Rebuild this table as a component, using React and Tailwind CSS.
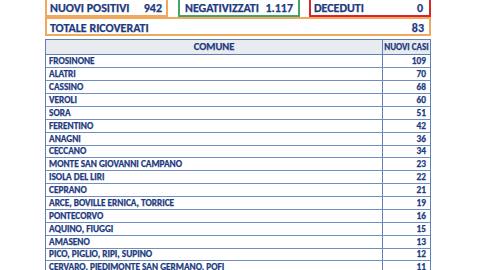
import React from "react";

const rows = [
  ["FROSINONE", "109"],
  ["ALATRI", "70"],
  ["CASSINO", "68"],
  ["VEROLI", "60"],
  ["SORA", "51"],
  ["FERENTINO", "42"],
  ["ANAGNI", "36"],
  ["CECCANO", "34"],
  ["MONTE SAN GIOVANNI CAMPANO", "23"],
  ["ISOLA DEL LIRI", "22"],
  ["CEPRANO", "21"],
  ["ARCE, BOVILLE ERNICA, TORRICE", "19"],
  ["PONTECORVO", "16"],
  ["AQUINO, FIUGGI", "15"],
  ["AMASENO", "13"],
  ["PICO, PIGLIO, RIPI, SUPINO", "12"],
  ["CERVARO, PIEDIMONTE SAN GERMANO, POFI", "11"],
];

export default function App() {
  return (
    <div className="w-[480px] h-[270px] overflow-hidden bg-white text-[#1d3a80] font-bold font-['Carlito','Liberation_Sans',sans-serif] [-webkit-text-stroke:0.25px_#1d3a80]">
      <div className="ml-[45px] w-[386px] flex flex-col">
        <div className="flex mt-[-5px] h-[22px]">
          <div className="w-[123px] border-2 border-[#f2a85c] flex items-center justify-between pl-[3px] pr-[4px] text-[12px] pt-[4px]">
            <span>NUOVI POSITIVI</span>
            <span>942</span>
          </div>
          <div className="w-[122px] ml-[10px] border-2 border-[#3fa66a] flex items-center justify-between pl-[5px] pr-[5px] text-[12px] pt-[4px]">
            <span>NEGATIVIZZATI</span>
            <span>1.117</span>
          </div>
          <div className="w-[122px] ml-[9px] border-2 border-[#d8262b] flex items-center justify-between pl-[3px] pr-[6px] text-[12px] pt-[4px]">
            <span>DECEDUTI</span>
            <span>0</span>
          </div>
        </div>
        <div className="h-[19px] border-2 border-[#f2a85c] flex items-center justify-between pl-[3px] pr-[5px] text-[12px] pt-[2px]">
          <span>TOTALE RICOVERATI</span>
          <span>83</span>
        </div>
        <div className="mt-[3px] border-l border-r border-t border-[#5f80b6] flex flex-col">
          <div className="flex h-[15.4px] bg-[#e8ebf0] border-b border-[#5f80b6]">
            <div className="w-[336px] flex items-center justify-center text-[10.5px]">COMUNE</div>
            <div className="flex-1 border-l border-[#5f80b6] flex items-center justify-center text-[9px]">NUOVI CASI</div>
          </div>
          {rows.map(([name, n]) => (
            <div key={name} className="flex h-[12.89px] border-b border-[#6f8fc2]">
              <div className="w-[336px] flex items-center pl-[3px] text-[9.3px]">{name}</div>
              <div className="flex-1 border-l border-[#5f80b6] flex items-center justify-end pr-[4px] text-[9.3px]">{n}</div>
            </div>
          ))}
        </div>
      </div>
    </div>
  );
}
